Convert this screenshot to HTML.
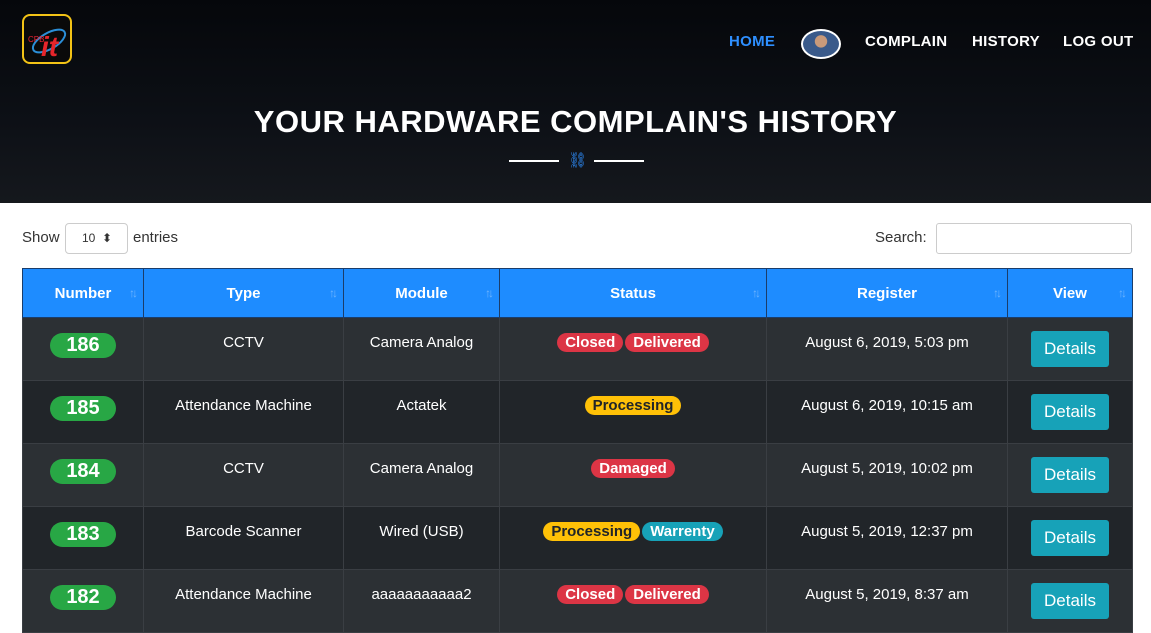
<!DOCTYPE html><html><head><style>
body{margin:0;width:1151px;height:615px;overflow:hidden;background:#fff;font-family:"Liberation Sans",sans-serif;}
.hero{position:absolute;left:0;top:0;width:1151px;height:203px;background:linear-gradient(180deg,#05070b 0%,#0d1016 60%,#15181d 100%);}
.logo{position:absolute;left:22px;top:14px;width:46px;height:46px;border:2px solid #f3c316;border-radius:8px;background:#0a0a0a;overflow:hidden}
.nav{position:absolute;top:33px;font-weight:bold;font-size:15px;color:#fff;letter-spacing:.3px}
h1{position:absolute;top:104px;left:0;width:1151px;text-align:center;margin:0;color:#fff;font-size:31px;letter-spacing:.5px}
.line{position:absolute;top:160px;height:2px;width:50px;background:#fff}
.tool{position:absolute;top:229px;font-size:15px;color:#333}
table{position:absolute;left:22px;top:268px;width:1110px;border-collapse:collapse;table-layout:fixed}
th{background:#1e8cff;color:#fff;height:49px;padding:0;font-size:15px;border:1px solid #1b3d6a;position:relative;box-sizing:border-box}
th:after{content:"↑↓";position:absolute;right:8px;top:17px;color:rgba(255,255,255,.35);font-size:12px;font-weight:normal;letter-spacing:-3px}
td{height:63px;box-sizing:border-box;border:1px solid #3a3e43;color:#fff;text-align:center;font-size:15px;vertical-align:top;padding:16px 0 0}
tr.o td{background:#2c3034}tr.e td{background:#212529}
td.p{padding-top:15px}
.n{display:inline-block;background:#28a745;border-radius:15px;padding:1px 16px;font-weight:bold;font-size:20px}
.b{display:inline-block;border-radius:10px;padding:1px 8px;font-weight:bold;font-size:15px;margin:0 1px}
.r{background:#dc3545}.y{background:#ffc107;color:#212529}.c{background:#17a2b8}
td.v{padding-top:13px}
.d{display:inline-block;background:#17a2b8;padding:8px 13px;font-size:17px;border-radius:3px}
</style></head><body>
<div class="hero">
<div class="logo"><svg width="46" height="46"><ellipse cx="25" cy="25" rx="18" ry="8" fill="none" stroke="#2b8fd8" stroke-width="2" transform="rotate(-30 25 25)"/><text x="4" y="26" font-size="8" fill="#e23" font-family="Liberation Sans">CPB</text><text x="17" y="40" font-size="28" font-weight="bold" fill="#e5252b" font-style="italic" font-family="Liberation Sans">it</text></svg></div>
<div class="nav" style="left:729px;color:#2e8fff">HOME</div>
<div style="position:absolute;left:801px;top:29px;width:36px;height:26px;border-radius:50%;border:2px solid #fff;background:radial-gradient(circle at 50% 40%,#c99a7a 0 25%,#3a5a8a 27%)"></div>
<div class="nav" style="left:865px">COMPLAIN</div>
<div class="nav" style="left:972px">HISTORY</div>
<div class="nav" style="left:1063px">LOG OUT</div>
<h1>YOUR HARDWARE COMPLAIN'S HISTORY</h1>
<div class="line" style="left:509px"></div><div class="line" style="left:594px"></div>
<div style="position:absolute;left:568px;top:151px;color:#2e8fff;font-size:15px">⛓</div>
</div>
<div class="tool" style="left:22px">Show</div>
<div style="position:absolute;left:65px;top:223px;width:61px;height:29px;border:1px solid #ccc;border-radius:4px;font-size:12px;line-height:29px;color:#333;text-indent:16px">10 &nbsp;⬍</div>
<div class="tool" style="left:133px">entries</div>
<div class="tool" style="left:875px">Search:</div>
<div style="position:absolute;left:936px;top:223px;width:194px;height:29px;border:1px solid #ccc;border-radius:3px"></div>
<table>
<colgroup><col style="width:121px"><col style="width:200px"><col style="width:156px"><col style="width:267px"><col style="width:241px"><col style="width:125px"></colgroup>
<tr><th>Number</th><th>Type</th><th>Module</th><th>Status</th><th>Register</th><th>View</th></tr>
<tr class="o"><td class="p"><span class="n">186</span></td><td>CCTV</td><td>Camera Analog</td><td class="p"><span class="b r">Closed</span><span class="b r">Delivered</span></td><td>August 6, 2019, 5:03 pm</td><td class="v"><span class="d">Details</span></td></tr>
<tr class="e"><td class="p"><span class="n">185</span></td><td>Attendance Machine</td><td>Actatek</td><td class="p"><span class="b y">Processing</span></td><td>August 6, 2019, 10:15 am</td><td class="v"><span class="d">Details</span></td></tr>
<tr class="o"><td class="p"><span class="n">184</span></td><td>CCTV</td><td>Camera Analog</td><td class="p"><span class="b r">Damaged</span></td><td>August 5, 2019, 10:02 pm</td><td class="v"><span class="d">Details</span></td></tr>
<tr class="e"><td class="p"><span class="n">183</span></td><td>Barcode Scanner</td><td>Wired (USB)</td><td class="p"><span class="b y">Processing</span><span class="b c">Warrenty</span></td><td>August 5, 2019, 12:37 pm</td><td class="v"><span class="d">Details</span></td></tr>
<tr class="o"><td class="p"><span class="n">182</span></td><td>Attendance Machine</td><td>aaaaaaaaaaa2</td><td class="p"><span class="b r">Closed</span><span class="b r">Delivered</span></td><td>August 5, 2019, 8:37 am</td><td class="v"><span class="d">Details</span></td></tr>
</table>
</body></html>
